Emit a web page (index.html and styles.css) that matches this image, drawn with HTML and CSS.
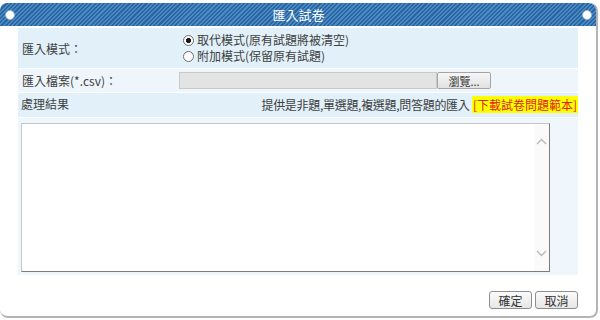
FILE: index.html
```html
<!DOCTYPE html>
<html>
<head>
	<title>匯入試卷</title>
	<link rel="stylesheet" href="styles.css">
</head>
<body>
<div class="dialog">
	<div class="title_bar">
		<span class="dot"></span>
		<span class="title">匯入試卷</span>
		<span class="dot"></span>
	</div>
	<div class="dialog_body">
		<div class="row row_mode">
			<div class="label">匯入模式：</div>
			<div class="options">
				<label><input type="radio" name="mode" checked>取代模式(原有試題將被清空)</label>
				<label><input type="radio" name="mode">附加模式(保留原有試題)</label>
			</div>
		</div>
		<div class="row row_file">
			<div class="label">匯入檔案(*.csv)：</div>
			<div class="field">
				<span class="file_path"></span>
				<button class="browse">瀏覽...</button>
			</div>
		</div>
		<div class="row row_head">
			<div class="label">處理結果</div>
			<div class="hint">提供是非題,單選題,複選題,問答題的匯入 <a class="sample">[下載試卷問題範本]</a></div>
		</div>
		<div class="row row_result">
			<div class="result_box">
				<div class="result_text"></div>
				<div class="scroll">
					<svg width="11" height="7" viewBox="0 0 11 7"><path d="M1 6 L5.5 1.5 L10 6" fill="none" stroke="#b8b8b8" stroke-width="1.4"/></svg>
					<svg width="11" height="7" viewBox="0 0 11 7"><path d="M1 1 L5.5 5.5 L10 1" fill="none" stroke="#b8b8b8" stroke-width="1.4"/></svg>
				</div>
			</div>
		</div>
		<div class="actions">
			<button class="btn">確定</button>
			<button class="btn">取消</button>
		</div>
	</div>
</div>
</body>
</html>
```
FILE: styles.css
```css
body{
	margin: 0;
	background: #fff;
	font-family: "Noto Sans CJK TC", "Liberation Sans", sans-serif;
	font-size: 12px;
	color: #404040;
}
.dialog{
	margin-top: 3px;
	width: 598px;
	height: 315px;
	box-sizing: border-box;
	border-right: 2px solid #b4b4b4;
	border-bottom: 2px solid #b4b4b4;
	border-radius: 8px;
	background: #fff;
}
.title_bar{
	height: 23px;
	border-radius: 7px 7px 0 0;
	background: repeating-linear-gradient(-45deg, #2b66a0 0px, #2b66a0 1.5px, #4a8ac4 1.5px, #4a8ac4 3px);
	display: flex;
	align-items: center;
	justify-content: space-between;
	padding: 0 4px 0 5px;
	color: #fff;
}
.title{
	font-size: 13px;
}
.dot{
	width: 8px;
	height: 8px;
	border-radius: 50%;
	background: #fff;
	border: 1px solid #9bbad6;
}
.dialog_body{
	padding: 2px 18px 0 18px;
}
.row{
	display: flex;
	align-items: center;
	margin-bottom: 1px;
}
.row_mode{
	height: 40px;
	background: #e1f0f9;
}
.row_file{
	height: 23px;
	background: #eef6fb;
}
.row_head{
	height: 24px;
	background: #e1f0f9;
	justify-content: space-between;
}
.row_result{
	height: 157px;
	background: #eff7fc;
	align-items: flex-start;
}
.label{
	width: 157px;
	padding-left: 4px;
}
.row_head .label{
	width: auto;
	padding-left: 3px;
	margin-top: -3px;
}
.options{
	display: flex;
	flex-direction: column;
	align-items: flex-start;
	line-height: 16px;
}
.options label{
	display: flex;
	align-items: center;
}
.options input{
	appearance: none;
	margin: 0 3px 0 4px;
	width: 11px;
	height: 11px;
	box-sizing: border-box;
	border: 1px solid #6d6d6d;
	border-radius: 50%;
	background: #fff;
}
.options input:checked{
	background: radial-gradient(circle, #1a1a1a 0, #1a1a1a 2.4px, #fff 2.9px);
}
.field{
	display: flex;
	align-items: center;
}
.file_path{
	width: 256px;
	height: 15px;
	background: #e3e3e3;
	border: 1px solid #c9c9c9;
}
.browse{
	width: 54px;
	height: 17px;
	padding: 0;
	border: 1px solid #a5a5a5;
	border-radius: 2px;
	background: linear-gradient(#f6f6f6, #e2e2e2);
	font: inherit;
	font-size: 11px;
	color: #333;
}
.hint{
	margin-top: -2px;
	letter-spacing: -0.3px;
}
.sample{
	background: #ffff00;
	color: #e0241c;
	padding: 0 1px;
	letter-spacing: 0;
}
.result_box{
	margin: 5px 0 0 3px;
	width: 529px;
	height: 149px;
	box-sizing: border-box;
	border: 1px solid #c3c7cc;
	border-right-color: #7d7d7d;
	border-bottom-color: #7d7d7d;
	background: #fff;
	display: flex;
}
.result_text{
	flex: 1;
}
.scroll{
	width: 15px;
	background: #fafafa;
	display: flex;
	flex-direction: column;
	justify-content: space-between;
	align-items: center;
	padding: 14px 0 14px;
}
.actions{
	display: flex;
	justify-content: flex-end;
	gap: 3px;
	margin-top: 16px;
}
.btn{
	width: 43px;
	height: 18px;
	padding: 0;
	border: 1px solid #8e8e8e;
	border-radius: 3px;
	background: linear-gradient(#fbfbfb, #e6e6e6);
	font: inherit;
	font-size: 12px;
	color: #333;
}
```
